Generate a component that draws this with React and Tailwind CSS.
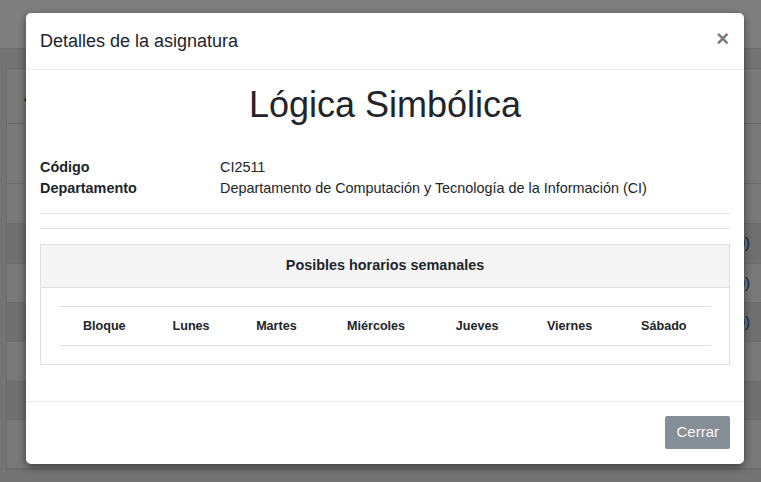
const DAYS = ['Bloque', 'Lunes', 'Martes', 'Miércoles', 'Jueves', 'Viernes', 'Sábado'];

const BG_ROWS = [
    { h: 'h-[60px]', shade: false },
    { h: 'h-[40px]', shade: false },
    { h: 'h-[40px]', shade: true, tag: '(0)' },
    { h: 'h-[39px]', shade: false, tag: '(0)' },
    { h: 'h-[39px]', shade: true, tag: '(0)' },
    { h: 'h-[40px]', shade: false },
    { h: 'h-[38px]', shade: true },
    { h: 'h-[49px]', shade: false },
];

const Background = () => (
    <div className="absolute inset-0 bg-[#e6e6e6]">
        <div className="h-[49px] bg-white border-b border-[#dcdcdc]" />
        <div className="ml-[6px] mt-[19px] w-[800px] border border-[#d2d2d2] bg-[#f2f2f2]">
            <div className="h-[55px] border-b border-[#d2d2d2] pl-[17px] flex items-center">
                <span className="text-[17px] font-bold text-[#222]">Asignaturas</span>
            </div>
            {BG_ROWS.map((row, i) => (
                <div
                    key={i}
                    className={`${row.h} border-b border-[#d8d8d8] flex items-center justify-end pr-[55px] ${row.shade ? 'bg-[#e0e0e0]' : 'bg-[#f2f2f2]'}`}
                >
                    {row.tag && <span className="text-[15px] text-[#1d4f8a]">{row.tag}</span>}
                </div>
            ))}
        </div>
    </div>
);

const App = () => {
    return (
        <div className="relative w-[761px] h-[482px] overflow-hidden" style={{ fontFamily: '"Liberation Sans", Arial, sans-serif' }}>
            <Background />

            {/* backdrop */}
            <div className="absolute inset-0 bg-black/50" />

            {/* modal */}
            <div className="absolute left-[26px] top-[13px] w-[718px] bg-white rounded-[5px] shadow-[0_3px_9px_rgba(0,0,0,0.5)] text-[#212529]">
                <div className="h-[57px] px-[14px] flex items-center justify-between border-b border-[#e9ecef]">
                    <h5 className="text-[18px] leading-[27px] pt-[1px]">Detalles de la asignatura</h5>
                    <span className="text-[22px] font-bold leading-none text-[#7a7a7a] mr-[1px] -mt-[5px]">×</span>
                </div>

                <div className="px-[14px] pt-[15px] pb-[36px]">
                    <h1 className="text-[36px] leading-[40px] text-center text-[#212529]">Lógica Simbólica</h1>

                    <dl className="mt-[32px] grid grid-cols-[180px_1fr] text-[14.4px] leading-[21px]">
                        <dt className="font-bold">Código</dt>
                        <dd>CI2511</dd>
                        <dt className="font-bold">Departamento</dt>
                        <dd>Departamento de Computación y Tecnología de la Información (CI)</dd>
                    </dl>

                    <hr className="mt-[14px] border-[#e5e5e5]" />
                    <hr className="mt-[14px] border-[#e5e5e5]" />

                    <div className="mt-[15px] border border-[#dfdfdf]">
                        <div className="h-[43px] bg-[#f5f5f5] border-b border-[#dfdfdf] flex items-center justify-center">
                            <span className="text-[14.4px] font-bold">Posibles horarios semanales</span>
                        </div>
                        <div className="p-[18px]">
                            <table className="w-full border-collapse">
                                <thead>
                                    <tr className="border-t border-b border-[#dee2e6]">
                                        {DAYS.map(d => (
                                            <th key={d} className="px-[12px] py-[12px] text-center text-[12.6px] leading-[14px] font-bold">
                                                {d}
                                            </th>
                                        ))}
                                    </tr>
                                </thead>
                            </table>
                        </div>
                    </div>
                </div>

                <div className="h-[63px] border-t border-[#e9ecef] px-[14px] flex items-center justify-end">
                    <button className="h-[33px] px-[11px] bg-[#868e96] text-[#f8f9fa] text-[15px] rounded-[2px] -mt-[1px]">Cerrar</button>
                </div>
            </div>
        </div>
    );
};

export default App;
